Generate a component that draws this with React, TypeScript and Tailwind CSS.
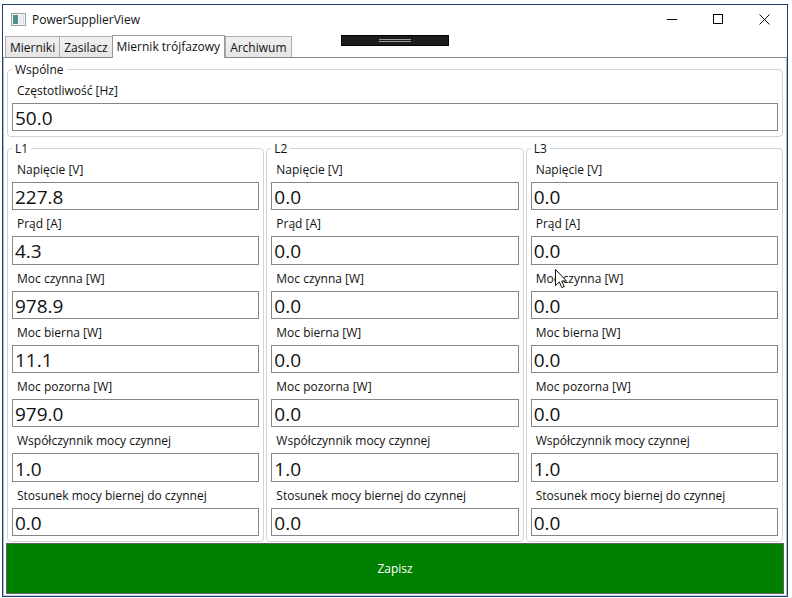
import { useState } from "react";

type Reading = { label: string; value: string };
type Phase = { name: string; readings: Reading[] };

const tabs = ["Mierniki", "Zasilacz", "Miernik trójfazowy", "Archiwum"];

const readingLabels = [
  "Napięcie [V]",
  "Prąd [A]",
  "Moc czynna [W]",
  "Moc bierna [W]",
  "Moc pozorna [W]",
  "Współczynnik mocy czynnej",
  "Stosunek mocy biernej do czynnej",
];

function makePhase(name: string, values: string[]): Phase {
  return { name, readings: readingLabels.map((label, i) => ({ label, value: values[i] })) };
}

const phases: Phase[] = [
  makePhase("L1", ["227.8", "4.3", "978.9", "11.1", "979.0", "1.0", "0.0"]),
  makePhase("L2", ["0.0", "0.0", "0.0", "0.0", "0.0", "1.0", "0.0"]),
  makePhase("L3", ["0.0", "0.0", "0.0", "0.0", "0.0", "1.0", "0.0"]),
];

function Field({ id, label, value }: { id: string; label: string; value: string }) {
  return (
    <div className="flex flex-1 flex-col">
      <label htmlFor={id} className="h-[26px] pl-[5px] leading-7 whitespace-nowrap">
        {label}
      </label>
      <input
        id={id}
        defaultValue={value}
        className="min-h-7 w-full min-w-0 flex-1 border border-[#85858a] bg-white px-0.5 pt-0.5 text-[19px] leading-6 outline-none"
      />
    </div>
  );
}

function Group({ title, children }: { title: string; children: React.ReactNode }) {
  return (
    <fieldset className="flex min-w-0 flex-col rounded-[4px] border border-[#cbd6dc] px-1 pb-[5px]">
      <legend className="px-[3px] leading-[15px]">{title}</legend>
      {children}
    </fieldset>
  );
}

function AppIcon() {
  return (
    <svg width="15" height="13" viewBox="0 0 15 13" shapeRendering="crispEdges">
      <rect width="15" height="13" fill="#9aa1a8" />
      <rect x="1" y="1" width="13" height="11" fill="#f4f6f8" />
      <rect x="2" y="2" width="5" height="9" fill="#4f8f86" />
      <rect x="8" y="2" width="3" height="9" fill="#e6edf2" />
      <rect x="12" y="2" width="1" height="9" fill="#cfd8df" />
    </svg>
  );
}

function TitleBar() {
  const button = "flex h-7 w-[46px] items-center justify-center";
  return (
    <header className="flex h-[30px] items-center pb-px pl-2">
      <AppIcon />
      <h1 className="ml-1.5 flex-1">PowerSupplierView</h1>
      <button aria-label="Minimize" className={button}>
        <svg width="11" height="11" shapeRendering="crispEdges">
          <path d="M0 5.5H10" stroke="#000" />
        </svg>
      </button>
      <button aria-label="Maximize" className={button}>
        <svg width="11" height="11" shapeRendering="crispEdges">
          <rect x="0.5" y="0.5" width="9" height="9" fill="none" stroke="#000" />
        </svg>
      </button>
      <button aria-label="Close" className={button}>
        <svg width="11" height="11">
          <path d="M0.5 0.5L10.5 10.5M10.5 0.5L0.5 10.5" stroke="#111" fill="none" />
        </svg>
      </button>
    </header>
  );
}

export default function App() {
  const [active, setActive] = useState(2);

  return (
    <div className="flex min-h-screen bg-white pt-1 pr-1 pb-px pl-0.5 font-['Open_Sans','Noto_Sans',sans-serif] text-[12px] text-[#111]">
      <div className="relative flex flex-1 flex-col border border-[#1f3d70]">
        <TitleBar />

        <div className="absolute top-[30px] left-[338px] flex h-[11px] w-[108px] flex-col items-center justify-center gap-px border border-black bg-[#1c1c1c]">
          <span className="h-px w-8 bg-[#9a9a9a]" />
          <span className="h-px w-8 bg-[#9a9a9a]" />
        </div>

        <div role="tablist" className="flex h-[22px] items-end pl-0.5">
          {tabs.map((tab, i) => (
            <button
              key={tab}
              role="tab"
              aria-selected={i === active}
              onClick={() => setActive(i)}
              className={
                i === active
                  ? "z-10 -mb-px h-[23px] border border-b-0 border-[#999] bg-white px-1"
                  : "-mr-px h-[21px] border border-b-0 border-[#acacac] bg-linear-to-b from-[#f0f0f0] to-[#e5e5e5] px-1 pt-0.5"
              }
            >
              {tab}
            </button>
          ))}
        </div>

        <main className="flex flex-1 flex-col border border-x-[#a9bcd8] border-t-[#888] border-b-[#c4d0e2] px-0.5 pt-1 pb-px">
          <div className="flex flex-1 flex-col gap-1 px-px">
            <Group title="Wspólne">
              <Field id="frequency" label="Częstotliwość [Hz]" value="50.0" />
            </Group>
            <div className="grid flex-1 grid-cols-3 gap-0.5">
              {phases.map((phase) => (
                <Group key={phase.name} title={phase.name}>
                  {phase.readings.map((r, i) => (
                    <Field key={r.label} id={`${phase.name}-${i}`} label={r.label} value={r.value} />
                  ))}
                </Group>
              ))}
            </div>
          </div>
          <button className="mt-px h-[51px] border border-[#606060] bg-[#008000] text-white">
            Zapisz
          </button>
        </main>

        <svg
          className="pointer-events-none absolute top-[264px] left-[552px]"
          width="12"
          height="20"
          viewBox="0 0 12 20"
        >
          <path
            d="M0.5 0.5V16.5L4.3 12.9L6.8 18.6L9.3 17.5L6.8 12H11.5Z"
            fill="#fff"
            stroke="#111"
          />
        </svg>
      </div>
    </div>
  );
}
